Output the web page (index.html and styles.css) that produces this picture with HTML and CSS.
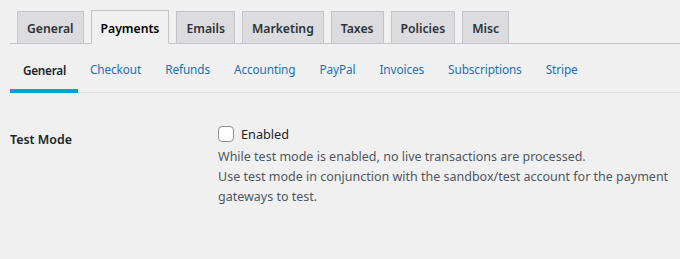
FILE: index.html
```html
<!DOCTYPE html>
<html>
<head>
<meta charset="utf-8">
<link rel="stylesheet" href="styles.css">
</head>
<body>
<div class="wrap">
  <nav class="tabs">
    <a class="tab">General</a>
    <a class="tab active">Payments</a>
    <a class="tab">Emails</a>
    <a class="tab">Marketing</a>
    <a class="tab">Taxes</a>
    <a class="tab">Policies</a>
    <a class="tab">Misc</a>
  </nav>
  <nav class="subnav">
    <a class="sub current">General</a>
    <a class="sub">Checkout</a>
    <a class="sub">Refunds</a>
    <a class="sub">Accounting</a>
    <a class="sub">PayPal</a>
    <a class="sub">Invoices</a>
    <a class="sub">Subscriptions</a>
    <a class="sub">Stripe</a>
  </nav>
  <div class="row">
    <div class="label">Test Mode</div>
    <div class="field">
      <label class="check"><span class="box"></span>Enabled</label>
      <p class="desc">While test mode is enabled, no live transactions are processed.<br>Use test mode in conjunction with the sandbox/test account for the payment gateways to test.</p>
    </div>
  </div>
</div>
</body>
</html>
```
FILE: styles.css
```css
html, body {
  margin: 0;
  background: #f0f0f1;
}
body {
  font-family: "Noto Sans", "Open Sans", sans-serif;
  color: #1d2327;
}
.wrap {
  padding-left: 10px;
}
.tabs {
  display: flex;
  align-items: flex-end;
  gap: 7px;
  padding: 10px 0 0 7px;
  border-bottom: 1px solid #c3c4c7;
  height: 33px;
  box-sizing: content-box;
}
.tab {
  display: block;
  box-sizing: border-box;
  height: 33px;
  margin-bottom: -1px;
  padding: 0 9px;
  line-height: 33px;
  font-size: 12.2px;
  font-weight: 600;
  color: #2c3338;
  background: #dcdcde;
  border: 1px solid #c3c4c7;
}
.tab.active {
  height: 34px;
  line-height: 35px;
  color: #000;
  background: #f0f0f1;
  border-bottom-color: #f0f0f1;
}
.subnav {
  display: flex;
  height: 48px;
  border-bottom: 1px solid #dcdcde;
}
.sub {
  display: block;
  padding: 0 12px;
  line-height: 50px;
  font-size: 11.8px;
  letter-spacing: -0.1px;
  color: #2271b1;
  box-sizing: border-box;
  height: 48px;
}
.sub.current {
  padding: 0 12px 0 13px;
  font-weight: 600;
  letter-spacing: -0.3px;
  color: #1d2327;
  border-bottom: 4px solid #0a9ed9;
  line-height: 52px;
  height: 49px;
  margin-bottom: -1px;
}
.row {
  display: flex;
  padding-top: 31px;
}
.label {
  flex: 0 0 208px;
  font-size: 12.4px;
  font-weight: 600;
  color: #1d2327;
  padding-top: 7px;
}
.field {
  font-size: 12.5px;
}
.check {
  display: flex;
  align-items: center;
  gap: 7px;
  color: #1d2327;
  line-height: 20px;
  font-size: 12.7px;
}
.box {
  width: 16px;
  height: 16px;
  box-sizing: border-box;
  border: 1px solid #8c8f94;
  border-radius: 4px;
  background: #fff;
}
.desc {
  margin: 3px 0 0;
  color: #50575e;
  line-height: 20px;
  font-size: 12.5px;
}
```
